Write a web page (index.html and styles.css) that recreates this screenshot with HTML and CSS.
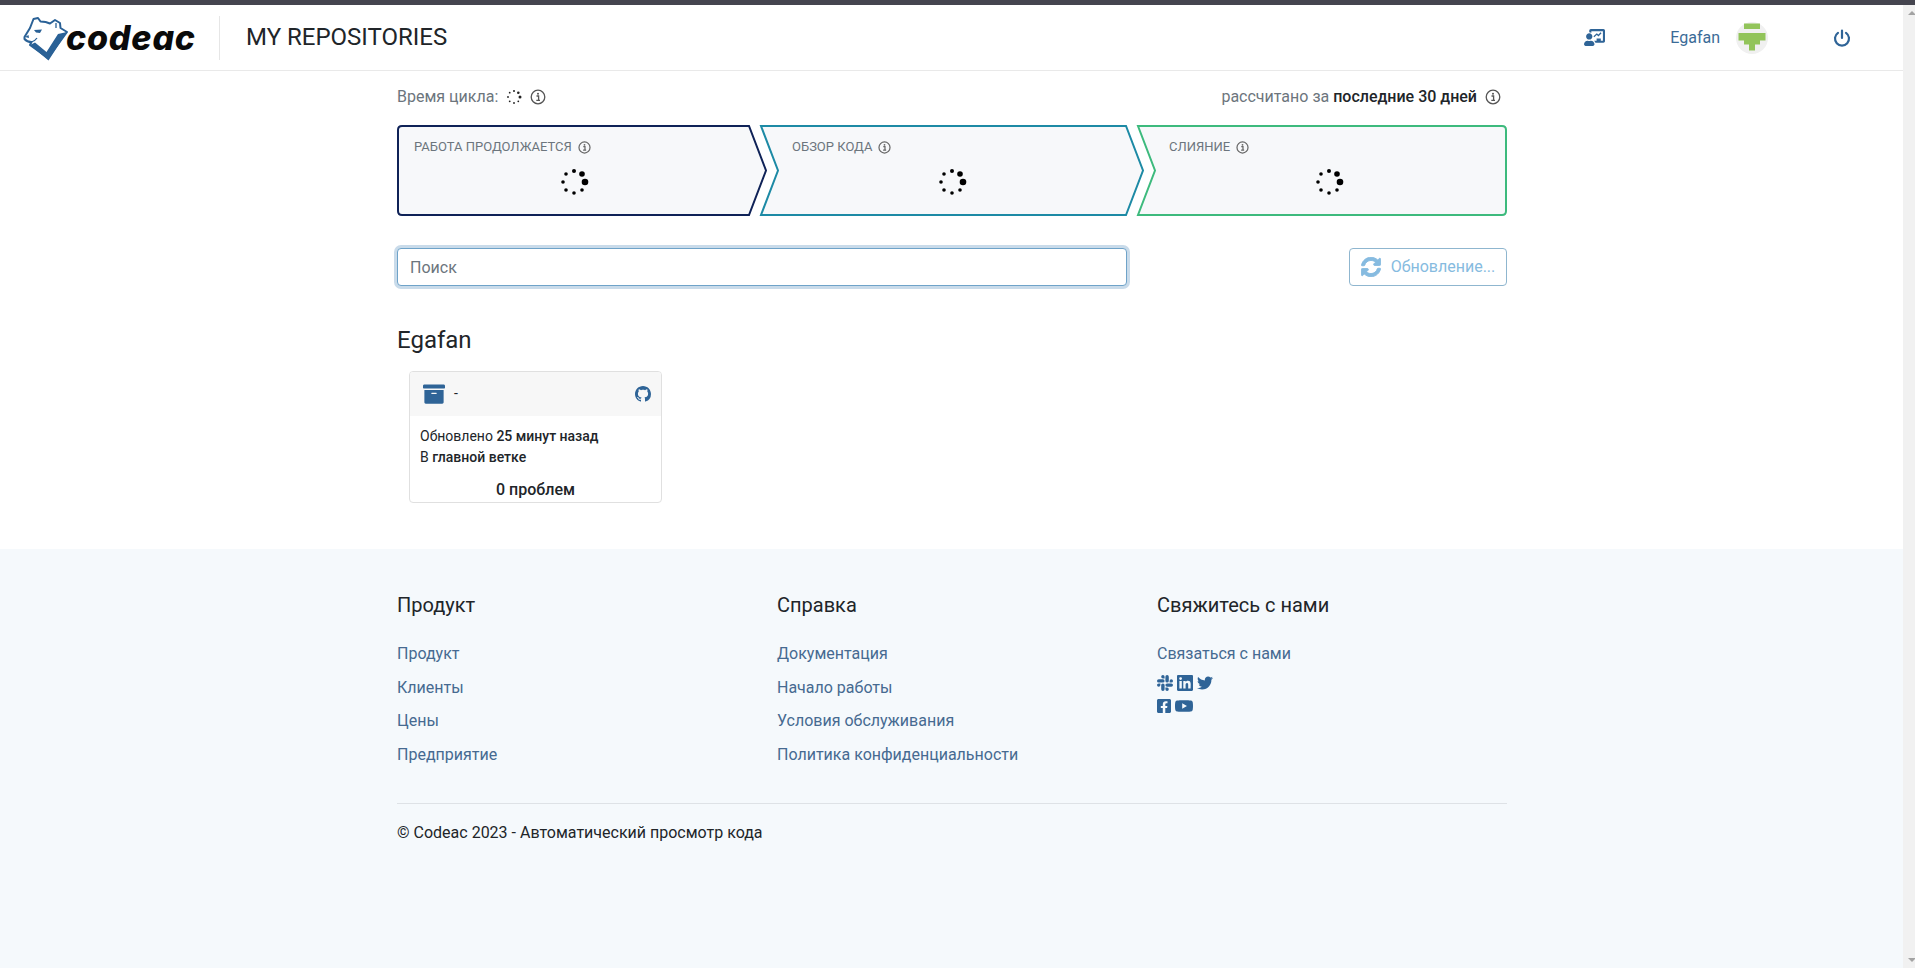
FILE: index.html
```html
<!DOCTYPE html>
<html lang="ru">
  <head>
    <meta charset="UTF-8" />
    <title>My repositories</title>
    <link rel="stylesheet" href="styles.css">
  </head>
  <body>
    <div class="page">
      <header class="topbar">
        <a class="logo">
          <svg class="logo-bear" viewBox="0 0 46 48" width="46" height="48">
            <path d="M1.500 23 L7 14 L10.500 5 L15 4 L17.500 7.500 Q23 7.500 27 9.500 L32 6 L37 9 L37.500 14 L44 18 L25 44 L7 31 L8.500 28 Q4 28 1.500 25 Z" fill="#fff" stroke="#2a6196" stroke-width="2" stroke-linejoin="round"/>
            <path d="M11 16 L19 15.500 L17 19 L13 18.500 Z M2 23 L5.500 21 L6 24 Z" fill="#2a6196"/>
            <path d="M33 9 L33 14 M8.500 28 Q12 27 14 24" fill="none" stroke="#2a6196" stroke-width="1.300"/>
            <path d="M7 31 L12 28.500 L23.500 38 L35 20 L44 18 L25.500 46.500 Z" fill="#2a6196"/>
          </svg>
          <span class="logo-text">codeac</span>
        </a>
        <h1 class="page-title">MY REPOSITORIES</h1>
        <div class="topbar-right">
          <svg class="teach-icon" viewBox="0 0 640 512" width="21" height="17"><path fill="#2f6497" d="M208 352c-2.400 0-4.800.400-7.100 1.100C188 357.400 174.500 360 160 360s-28-2.600-40.900-6.900c-2.300-.700-4.700-1.100-7.100-1.100C49.900 352-.4 402.500 0 464.600.2 490.800 21.800 512 48 512h224c26.200 0 47.800-21.200 48-47.400.4-62.100-49.900-112.600-112-112.600zM160 320c53 0 96-43 96-96s-43-96-96-96-96 43-96 96 43 96 96 96zM592 0H208c-26.500 0-48 22.300-48 49.600V96c23.400 0 45.100 6.800 64 17.800V64h352v288h-64v-64H384v64h-76.200c19.100 16.700 33.100 38.800 39.700 64H592c26.500 0 48-22.300 48-49.600V49.600C640 22.300 618.500 0 592 0z"/><path fill="none" stroke="#2f6497" stroke-width="40" d="M300 230 L390 150 L440 195 L520 110"/></svg>
          <span class="user-name">Egafan</span>
          <svg class="avatar" viewBox="0 0 32 32" width="32" height="32">
            <circle cx="16" cy="16" r="16" fill="#f0f0f0"/>
            <path fill="#92c45a" d="M8 1.500h16v5.500H8zM2.500 11h27v7.500H2.500zM8 18.500h16v4H8zM13 22.500h6v6h-6z"/>
          </svg>
          <svg class="power-icon" viewBox="0 0 18 18" width="18" height="18"><path d="M9 1.500V9 M5 3.800A7 7 0 1 0 13 3.800" fill="none" stroke="#2f6497" stroke-width="2.200" stroke-linecap="round"/></svg>
        </div>
      </header>

      <main class="content">
        <div class="cycle-row">
          <div class="cycle-left">
            <span>Время цикла:</span>
            <svg class="spinner-small" viewBox="0 0 16 16" width="16" height="16"><g fill="#222"><circle cx="14" cy="8" r="1.500"/><circle cx="12.300" cy="3.700" r="1.300"/><circle cx="8" cy="2" r="1"/><circle cx="3.700" cy="3.700" r=".9"/><circle cx="2" cy="8" r=".9"/><circle cx="3.700" cy="12.300" r=".9"/><circle cx="8" cy="14" r=".9"/><circle cx="12.300" cy="12.300" r=".9"/></g></svg>
            <svg class="info" viewBox="0 0 16 16" width="16" height="16"><circle cx="8" cy="8" r="6.800" fill="none" stroke="#555" stroke-width="1.300"/><path d="M6.500 7h2.100v4M6.300 11.300h3.700" fill="none" stroke="#555" stroke-width="1.300"/><circle cx="8" cy="4.700" r="1" fill="#555"/></svg>
          </div>
          <div class="cycle-right">
            <span>рассчитано за <b>последние 30 дней</b></span>
            <svg class="info" viewBox="0 0 16 16" width="16" height="16"><circle cx="8" cy="8" r="6.800" fill="none" stroke="#555" stroke-width="1.300"/><path d="M6.500 7h2.100v4M6.300 11.300h3.700" fill="none" stroke="#555" stroke-width="1.300"/><circle cx="8" cy="4.700" r="1" fill="#555"/></svg>
          </div>
        </div>

        <div class="stages">
          <section class="stage stage-wip">
            <svg class="stage-shape" viewBox="0 0 370 91" width="370" height="91"><path d="M5 1 H352 L369 45.500 L352 90 H5 Q1 90 1 86 V5 Q1 1 5 1 Z" fill="#f7f8fa" stroke="#0f2257" stroke-width="2"/></svg>
            <div class="stage-title">РАБОТА ПРОДОЛЖАЕТСЯ
              <svg class="info-small" viewBox="0 0 16 16" width="13" height="13"><circle cx="8" cy="8" r="6.800" fill="none" stroke="#666" stroke-width="1.500"/><path d="M6.500 7h2.100v4M6.300 11.300h3.700" fill="none" stroke="#666" stroke-width="1.500"/><circle cx="8" cy="4.700" r="1.100" fill="#666"/></svg>
            </div>
            <svg class="spinner" viewBox="0 0 30 30" width="30" height="30"><g fill="#000"><circle cx="26" cy="15" r="3.300"/><circle cx="23" cy="7" r="2.800"/><circle cx="15" cy="4" r="2"/><circle cx="7" cy="7" r="1.800"/><circle cx="4" cy="15" r="1.800"/><circle cx="7" cy="23" r="1.800"/><circle cx="15" cy="26" r="1.800"/><circle cx="23" cy="23" r="1.800"/></g></svg>
          </section>
          <section class="stage stage-review">
            <svg class="stage-shape" viewBox="0 0 384 91" width="384" height="91"><path d="M1 1 H366 L383 45.500 L366 90 H1 L18 45.500 Z" fill="#f7f8fa" stroke="#1d8aa5" stroke-width="2"/></svg>
            <div class="stage-title">ОБЗОР КОДА
              <svg class="info-small" viewBox="0 0 16 16" width="13" height="13"><circle cx="8" cy="8" r="6.800" fill="none" stroke="#666" stroke-width="1.500"/><path d="M6.500 7h2.100v4M6.300 11.300h3.700" fill="none" stroke="#666" stroke-width="1.500"/><circle cx="8" cy="4.700" r="1.100" fill="#666"/></svg>
            </div>
            <svg class="spinner" viewBox="0 0 30 30" width="30" height="30"><g fill="#000"><circle cx="26" cy="15" r="3.300"/><circle cx="23" cy="7" r="2.800"/><circle cx="15" cy="4" r="2"/><circle cx="7" cy="7" r="1.800"/><circle cx="4" cy="15" r="1.800"/><circle cx="7" cy="23" r="1.800"/><circle cx="15" cy="26" r="1.800"/><circle cx="23" cy="23" r="1.800"/></g></svg>
          </section>
          <section class="stage stage-merge">
            <svg class="stage-shape" viewBox="0 0 370 91" width="370" height="91"><path d="M1 1 H365 Q369 1 369 5 V86 Q369 90 365 90 H1 L18 45.500 Z" fill="#f7f8fa" stroke="#3dba7d" stroke-width="2"/></svg>
            <div class="stage-title">СЛИЯНИЕ
              <svg class="info-small" viewBox="0 0 16 16" width="13" height="13"><circle cx="8" cy="8" r="6.800" fill="none" stroke="#666" stroke-width="1.500"/><path d="M6.500 7h2.100v4M6.300 11.300h3.700" fill="none" stroke="#666" stroke-width="1.500"/><circle cx="8" cy="4.700" r="1.100" fill="#666"/></svg>
            </div>
            <svg class="spinner" viewBox="0 0 30 30" width="30" height="30"><g fill="#000"><circle cx="26" cy="15" r="3.300"/><circle cx="23" cy="7" r="2.800"/><circle cx="15" cy="4" r="2"/><circle cx="7" cy="7" r="1.800"/><circle cx="4" cy="15" r="1.800"/><circle cx="7" cy="23" r="1.800"/><circle cx="15" cy="26" r="1.800"/><circle cx="23" cy="23" r="1.800"/></g></svg>
          </section>
        </div>

        <div class="toolbar">
          <input class="search" type="text" placeholder="Поиск" />
          <button class="refresh" type="button">
            <svg viewBox="0 0 512 512" width="20" height="20"><path fill="#86bbe0" stroke="#86bbe0" stroke-width="24" d="M370.700 133.300C339.500 104 298.900 88 255.800 88c-77.500.1-144.300 53.200-162.800 126.900-1.300 5.400-6.100 9.200-11.700 9.200H24.100c-7.500 0-13.200-6.800-11.800-14.200C33.900 94.900 134.800 8 256 8c66.400 0 126.800 26.100 171.300 68.700L463 41c15.100-15.100 41-4.400 41 17V192c0 13.300-10.700 24-24 24H345.900c-21.400 0-32.100-25.900-17-41l41.800-41.700zM32 296h134.100c21.400 0 32.100 25.900 17 41l-41.800 41.800c31.300 29.300 71.800 45.300 114.900 45.200 77.400-.1 144.300-53.100 162.800-126.800 1.300-5.400 6.100-9.200 11.700-9.200h57.300c7.500 0 13.200 6.800 11.800 14.200C478.100 417.100 377.200 504 256 504c-66.400 0-126.800-26.100-171.300-68.700L49 471c-15.100 15.100-41 4.400-41-17V320c0-13.300 10.700-24 24-24z"/></svg>
            Обновление...
          </button>
        </div>

        <h2 class="owner">Egafan</h2>

        <article class="repo-card">
          <div class="repo-head">
            <svg viewBox="0 0 512 512" width="22" height="22"><path fill="#2f6497" d="M32 448c0 17.700 14.300 32 32 32h384c17.700 0 32-14.300 32-32V160H32v288zm160-212c0-6.600 5.400-12 12-12h104c6.600 0 12 5.400 12 12v8c0 6.600-5.400 12-12 12H204c-6.600 0-12-5.400-12-12v-8zM480 32H32C14.300 32 0 46.300 0 64v48c0 8.800 7.200 16 16 16h480c8.800 0 16-7.200 16-16V64c0-17.700-14.300-32-32-32z"/></svg>
            <span class="repo-name">-</span>
            <svg class="repo-github" viewBox="0 0 16 16" width="16" height="16"><path fill="#2f6497" d="M8 0C3.580 0 0 3.580 0 8c0 3.540 2.290 6.530 5.470 7.590.4.070.55-.17.55-.38 0-.19-.01-.82-.01-1.490-2.010.37-2.530-.49-2.690-.94-.09-.23-.48-.94-.82-1.130-.28-.15-.68-.52-.01-.53.63-.01 1.080.58 1.230.82.72 1.210 1.870.87 2.330.66.07-.52.28-.87.51-1.070-1.780-.2-3.640-.89-3.640-3.950 0-.87.31-1.590.82-2.150-.08-.2-.36-1.020.08-2.120 0 0 .67-.21 2.200.82.64-.18 1.320-.27 2-.27s1.360.09 2 .27c1.530-1.040 2.200-.82 2.200-.82.44 1.100.16 1.920.08 2.120.51.56.82 1.270.82 2.150 0 3.070-1.870 3.750-3.650 3.950.29.25.54.73.54 1.480 0 1.070-.01 1.930-.01 2.200 0 .21.15.46.55.38A8.010 8.010 0 0 0 16 8c0-4.420-3.580-8-8-8z"/></svg>
          </div>
          <div class="repo-body">
            <p>Обновлено <b>25 минут назад</b></p>
            <p>В <b>главной ветке</b></p>
            <div class="repo-issues">0 проблем</div>
          </div>
        </article>
      </main>

      <footer class="footer">
        <div class="footer-cols">
          <div class="footer-col">
            <h5>Продукт</h5>
            <a>Продукт</a>
            <a>Клиенты</a>
            <a>Цены</a>
            <a>Предприятие</a>
          </div>
          <div class="footer-col">
            <h5>Справка</h5>
            <a>Документация</a>
            <a>Начало работы</a>
            <a>Условия обслуживания</a>
            <a>Политика конфиденциальности</a>
          </div>
          <div class="footer-col">
            <h5>Свяжитесь с нами</h5>
            <a>Связаться с нами</a>
            <div class="socials">
              <svg viewBox="0 0 16 16" width="16" height="16"><path fill="#2f6497" d="M3.400 10.100a1.700 1.700 0 1 1-1.700-1.700h1.700zm.8 0a1.700 1.700 0 0 1 3.400 0v4.200a1.700 1.700 0 0 1-3.400 0zM5.900 3.400a1.700 1.700 0 1 1 1.700-1.700v1.700zm0 .8a1.700 1.700 0 0 1 0 3.400H1.700a1.700 1.700 0 0 1 0-3.400zM12.600 5.900a1.700 1.700 0 1 1 1.700 1.700h-1.700zm-.8 0a1.700 1.700 0 0 1-3.400 0V1.700a1.700 1.700 0 0 1 3.400 0zM10.100 12.600a1.700 1.700 0 1 1-1.700 1.700v-1.700zm0-.8a1.700 1.700 0 0 1 0-3.400h4.200a1.700 1.700 0 0 1 0 3.400z"/></svg>
              <svg viewBox="0 0 16 16" width="16" height="16"><path fill="#2f6497" d="M14.800 0H1.200C.5 0 0 .5 0 1.200v13.600C0 15.500.5 16 1.200 16h13.600c.7 0 1.200-.5 1.200-1.200V1.200C16 .5 15.500 0 14.800 0zM4.800 13.600H2.400V6h2.400zM3.600 5a1.400 1.400 0 1 1 0-2.800 1.400 1.400 0 0 1 0 2.800zm10 8.600h-2.400V9.900c0-.9 0-2-1.200-2s-1.400 1-1.400 2v3.700H6.300V6h2.300v1c.3-.6 1.100-1.200 2.300-1.200 2.400 0 2.800 1.600 2.800 3.600z"/></svg>
              <svg viewBox="0 0 512 512" width="16" height="16"><path fill="#2f6497" d="M459.400 151.700c.3 4.500.3 9.100.3 13.600 0 138.700-105.600 298.600-298.600 298.600-59.500 0-114.700-17.200-161.100-47.100 8.400 1 16.600 1.300 25.300 1.300 49.100 0 94.200-16.600 130.300-44.800-46.100-1-84.800-31.200-98.100-72.800 6.500 1 13 1.600 19.800 1.600 9.400 0 18.800-1.300 27.600-3.600-48.100-9.700-84.100-52-84.100-103v-1.300c14 7.800 30.200 12.700 47.400 13.300-28.300-18.800-46.800-51-46.800-87.400 0-19.500 5.200-37.400 14.300-53 51.700 63.700 129.300 105.300 216.400 109.800-1.600-7.800-2.600-15.900-2.600-24 0-57.800 46.800-104.900 104.900-104.900 30.200 0 57.500 12.700 76.700 33.100 23.700-4.500 46.500-13.300 66.600-25.300-7.800 24-24.300 44.800-46.100 57.500 21.100-2.300 41.600-8.100 60.400-16.200-14.300 20.800-32.200 39.300-52.600 54.300z"/></svg>
              <svg viewBox="0 0 14 16" width="14" height="16"><path fill="#2f6497" d="M12.500 1H1.500C.7 1 0 1.700 0 2.500v11C0 14.300.7 15 1.500 15h4.300v-4.900H3.800V8h2V6.300c0-2 1.200-3 3-3 .9 0 1.700.1 1.700.1v1.900h-1c-1 0-1.200.6-1.200 1.200V8h2.100l-.3 2.100H8.300V15h4.200c.8 0 1.500-.7 1.500-1.500v-11C14 1.700 13.300 1 12.500 1z"/></svg>
              <svg viewBox="0 2 16 12" width="18" height="16"><path fill="#2f6497" d="M15.700 4.500c-.2-.7-.7-1.200-1.400-1.400C13 2.800 8 2.800 8 2.800s-5 0-6.300.3C1 3.300.5 3.800.3 4.500 0 5.700 0 8 0 8s0 2.300.3 3.500c.2.700.7 1.200 1.400 1.400 1.300.3 6.300.3 6.300.3s5 0 6.300-.3c.7-.2 1.200-.7 1.400-1.400C16 10.300 16 8 16 8s0-2.300-.3-3.500zM6.400 10.400V5.600L10.600 8z"/></svg>
            </div>
          </div>
        </div>
        <div class="copyright">© Codeac 2023 - Автоматический просмотр кода</div>
      </footer>
    </div>
    <div class="scrollbar"><span class="scroll-up"></span><span class="scroll-down"></span></div>
  </body>
</html>
```
FILE: styles.css
```css
* {
  box-sizing: border-box;
}
html,
body {
  height: 100%;
  margin: 0;
  overflow: hidden;
}
body {
  font-family: Roboto, "Liberation Sans", sans-serif;
  font-size: 16px;
  line-height: 1.5;
  color: #212529;
  background-color: #fff;
  display: flex;
  border-top: 5px solid #45454f;
}
.page {
  flex: 1;
  display: flex;
  flex-direction: column;
  min-width: 0;
}
.topbar {
  height: 66px;
  flex: none;
  display: flex;
  align-items: center;
  border-bottom: 1px solid #e9e9e9;
  padding-left: 23px;
}
.logo {
  display: flex;
  align-items: center;
  width: 197px;
  height: 44px;
  border-right: 1px solid #e6e6e6;
}
.logo-bear {
  flex: none;
}
.logo-text {
  font-family: Inter, sans-serif;
  font-weight: 800;
  font-style: italic;
  font-size: 34px;
  letter-spacing: 0.8px;
  line-height: 1;
  color: #0a0a0a;
  margin-left: -3px;
}
.page-title {
  font-size: 24px;
  font-weight: 400;
  line-height: 1.2;
  margin: 0 0 0 26px;
}
.topbar-right {
  margin-left: auto;
  display: flex;
  align-items: center;
  color: #3b6b97;
  padding-right: 52px;
}
.user-name {
  margin-left: 65px;
}
.avatar {
  margin-left: 16px;
}
.power-icon {
  margin-left: 65px;
}
.content {
  width: 1110px;
  margin-left: 397px;
  height: 478px;
  flex: none;
}
.cycle-row {
  display: flex;
  justify-content: space-between;
  align-items: center;
  height: 24px;
  margin-top: 14px;
  padding-right: 6px;
  color: #6c757d;
}
.cycle-left,
.cycle-right {
  display: flex;
  align-items: center;
  gap: 8px;
}
.cycle-right b {
  color: #212529;
  font-weight: 500;
}
.stages {
  display: flex;
  margin-top: 16px;
}
.stage {
  position: relative;
  height: 91px;
  flex: none;
  width: 370px;
  padding: 13px 0 0 17px;
}
.stage-review {
  width: 384px;
  margin: 0 -7px;
  padding-left: 32px;
}
.stage-merge {
  padding-left: 32px;
}
.stage-shape {
  position: absolute;
  left: 0;
  top: 0;
  overflow: visible;
}
.stage-title {
  position: relative;
  font-size: 13px;
  line-height: 18px;
  color: #6c757d;
  display: flex;
  align-items: center;
  gap: 6px;
}
.stage .spinner {
  position: absolute;
  top: 42px;
  left: 162px;
}
.stage-review .spinner,
.stage-merge .spinner {
  left: 177px;
}
.toolbar {
  display: flex;
  justify-content: space-between;
  margin-top: 32px;
}
.search {
  width: 730px;
  height: 38px;
  padding: 6px 12px;
  font: inherit;
  color: #495057;
  border: 1px solid #6fa3c9;
  border-radius: 4px;
  outline: none;
  box-shadow: 0 0 0 3px #c9dbea;
}
.search::placeholder {
  color: #6c757d;
}
.refresh {
  width: 158px;
  height: 38px;
  display: flex;
  align-items: center;
  justify-content: center;
  gap: 10px;
  font: inherit;
  color: #86bbe0;
  background: #fff;
  border: 1px solid #8fb6cf;
  border-radius: 4px;
}
.owner {
  font-size: 24px;
  font-weight: 400;
  line-height: 1.2;
  margin: 40px 0 0;
}
.repo-card {
  width: 253px;
  margin: 16px 0 0 12px;
  border: 1px solid #e0e0e0;
  border-radius: 4px;
  overflow: hidden;
}
.repo-head {
  height: 44px;
  background-color: #f7f7f7;
  display: flex;
  align-items: center;
  padding: 0 10px 0 13px;
}
.repo-name {
  font-size: 14px;
  margin-left: 9px;
  flex: 1;
}
.repo-body {
  padding: 10px 10px 0;
  font-size: 14px;
  line-height: 21px;
}
.repo-body p {
  margin: 0;
}
.repo-body b {
  font-weight: 500;
}
.repo-issues {
  text-align: center;
  font-size: 16px;
  font-weight: 500;
  line-height: 24px;
  margin-top: 10px;
}
.footer {
  flex: 1;
  background-color: #f5f9fc;
  padding: 44px 0 0 397px;
}
.footer-cols {
  display: flex;
  width: 1110px;
  height: 211px;
  border-bottom: 1px solid #dee2e6;
}
.footer-col {
  width: 380px;
  display: flex;
  flex-direction: column;
}
.footer-col:last-child {
  width: 350px;
}
.footer-col h5 {
  font-size: 20px;
  font-weight: 400;
  line-height: 1.2;
  margin: 0 0 25px;
}
.footer-col a {
  color: #466a91;
  line-height: 24px;
  margin-bottom: 9.700px;
}
.socials {
  width: 60px;
  display: flex;
  flex-wrap: wrap;
  gap: 7px 4px;
  margin-top: -1px;
}
.copyright {
  margin-top: 17px;
}
.scrollbar {
  width: 12px;
  flex: none;
  background-color: #f1f1f1;
  display: flex;
  flex-direction: column;
  justify-content: space-between;
  padding: 6px 0 6px 5px;
}
.scroll-up,
.scroll-down {
  width: 0;
  height: 0;
  border-left: 4px solid transparent;
  border-right: 4px solid transparent;
}
.scroll-up {
  border-bottom: 4px solid #a3a3a3;
}
.scroll-down {
  border-top: 4px solid #a3a3a3;
}
```
